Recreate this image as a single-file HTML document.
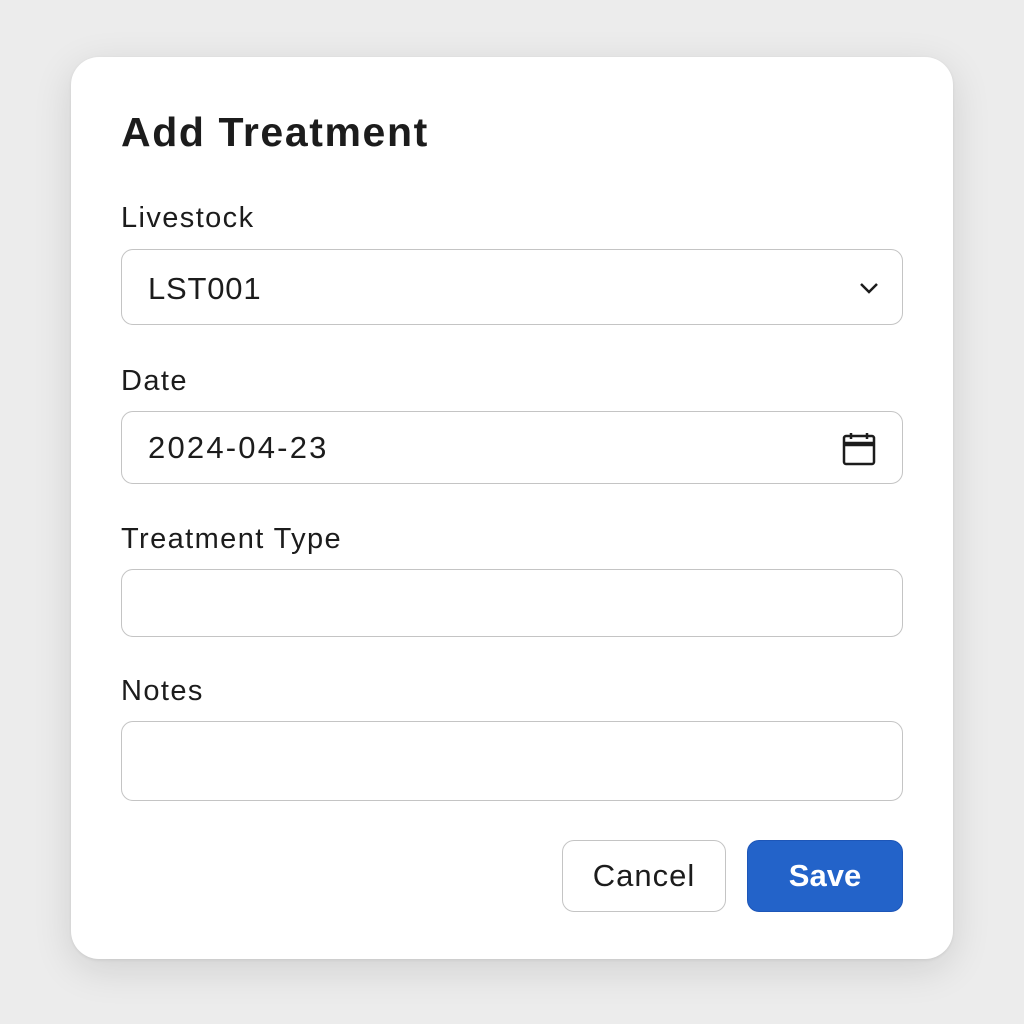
<!DOCTYPE html>
<html><head><style>
body{margin:0;width:1024px;height:1024px;background:#ececec;font-family:"Liberation Sans",sans-serif;position:relative;overflow:hidden}
.card{position:absolute;left:71px;top:57px;width:882px;height:902px;background:#fff;border-radius:28px;box-shadow:0 10px 40px rgba(0,0,0,0.12),0 1px 3px rgba(0,0,0,0.08)}
.t{position:absolute;left:121px;color:#1c1c1c}
.h{top:109px;font-size:41px;font-weight:bold;letter-spacing:1.6px}
.l{font-size:29px;letter-spacing:1.4px}
.i{position:absolute;left:121px;width:780px;border:1.5px solid #c4c4c4;border-radius:12px;background:#fff}
.v{position:absolute;left:26px;font-size:31px;color:#1c1c1c}
.btn{position:absolute;top:840px;height:72px;border-radius:12px;font-size:31px;display:flex;align-items:center;justify-content:center;box-sizing:border-box}
</style></head><body>
<div class="card"></div>
<div class="t h">Add Treatment</div>
<div class="t l" style="top:202px">Livestock</div>
<div class="i" style="top:249px;height:74px"><span class="v" style="top:21px;letter-spacing:0.8px">LST001</span>
<svg style="position:absolute;left:736px;top:30px" width="22" height="16" viewBox="0 0 22 16"><path d="M3 4l8 8 8-8" fill="none" stroke="#1c1c1c" stroke-width="2.5"/></svg></div>
<div class="t l" style="top:365px">Date</div>
<div class="i" style="top:411px;height:71px"><span class="v" style="top:18px;letter-spacing:2.2px">2024-04-23</span>
<svg style="position:absolute;left:718px;top:18px" width="40" height="40" viewBox="0 0 40 40"><rect x="4" y="6" width="30" height="28" rx="2" fill="none" stroke="#1c1c1c" stroke-width="2.5"/><path d="M4 13h30M4 15h30M11 3v6M27 3v6" stroke="#1c1c1c" stroke-width="2.5"/></svg></div>
<div class="t l" style="top:523px">Treatment Type</div>
<div class="i" style="top:569px;height:66px"></div>
<div class="t l" style="top:675px">Notes</div>
<div class="i" style="top:721px;height:78px"></div>
<div class="btn" style="left:562px;width:164px;border:1.5px solid #c4c4c4;color:#1c1c1c;background:#fff;letter-spacing:1px">Cancel</div>
<div class="btn" style="left:747px;width:156px;background:#2363c9;border:1.5px solid #1d56b8;color:#fff;font-weight:bold">Save</div>
</body></html>
